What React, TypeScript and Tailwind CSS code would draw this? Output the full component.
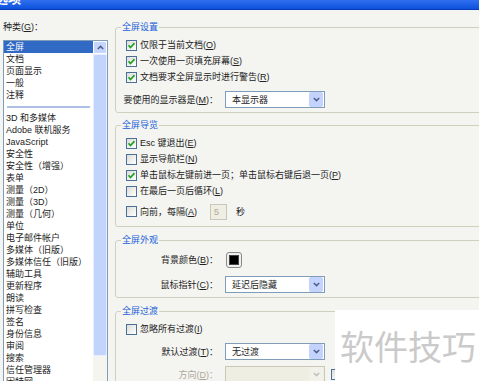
import React from "react";

const topItems = ["文档", "页面显示", "一般", "注释"];
const moreItems = [
  "3D 和多媒体",
  "Adobe 联机服务",
  "JavaScript",
  "安全性",
  "安全性（增强）",
  "表单",
  "测量（2D）",
  "测量（3D）",
  "测量（几何）",
  "单位",
  "电子邮件帐户",
  "多媒体（旧版）",
  "多媒体信任（旧版）",
  "辅助工具",
  "更新程序",
  "朗读",
  "拼写检查",
  "签名",
  "身份信息",
  "审阅",
  "搜索",
  "信任管理器",
  "因特网",
];

function Mn({ k }: { k: string }) {
  return (
    <span>
      (<span className="underline">{k}</span>)
    </span>
  );
}

function Box({ on }: { on?: boolean }) {
  return (
    <div className="w-[11px] h-[11px] shrink-0 border border-[#4a6f99] bg-gradient-to-br from-[#dcdcd7] to-white flex items-center justify-center">
      {on && (
        <svg width="9" height="9" viewBox="0 0 9 9">
          <path d="M1.5 4.3 L3.5 6.5 L7.5 2.2" fill="none" stroke="#21a121" strokeWidth="1.7" />
        </svg>
      )}
    </div>
  );
}

function Check({ on, text, k }: { on?: boolean; text: string; k: string }) {
  return (
    <div className="h-[16px] flex items-center gap-[3px] whitespace-nowrap">
      <Box on={on} />
      <span>
        {text}
        <Mn k={k} />
      </span>
    </div>
  );
}

function Chevron({ color }: { color: string }) {
  return (
    <svg width="7" height="5" viewBox="0 0 7 5">
      <path d="M0.8 1 L3.5 3.6 L6.2 1" fill="none" stroke={color} strokeWidth="1.5" />
    </svg>
  );
}

function Select({ value, disabled }: { value?: string; disabled?: boolean }) {
  return (
    <div
      className={`w-[100px] h-[17px] border flex items-center ${
        disabled ? "border-[#c9c7ba] bg-[#efeee2]" : "border-[#7f9db9] bg-white"
      }`}
    >
      <span className="flex-1 pl-[6px]">{value}</span>
      <div
        className={`w-[14px] h-[15px] mr-[1px] rounded-[2px] flex items-center justify-center ${
          disabled ? "bg-[#f3f2ea]" : "bg-[#c3d3fd]"
        }`}
      >
        <Chevron color={disabled ? "#c0c0b8" : "#4d6185"} />
      </div>
    </div>
  );
}

function Row({ label, k, gray, children }: { label: string; k: string; gray?: boolean; children: React.ReactNode }) {
  return (
    <div className={`flex items-center ${gray ? "text-[#aca899]" : ""}`}>
      <div className="w-[92px] shrink-0 flex justify-end whitespace-nowrap">
        <span>
          {label}
          <Mn k={k} />：
        </span>
      </div>
      <div className="ml-[7px] flex items-center">{children}</div>
    </div>
  );
}

function Group({ title, className, children }: { title: string; className?: string; children: React.ReactNode }) {
  return (
    <fieldset className={`border border-[#d0d0bf] rounded-[3px] px-[5px] ${className ?? ""}`}>
      <legend className="px-[1px] leading-[12px] text-[#1b5fd8]">{title}</legend>
      <div className="pl-[5px]">{children}</div>
    </fieldset>
  );
}

export default function App() {
  return (
    <div className="w-[479px] h-[381px] overflow-hidden relative bg-[#f4f4f1] text-[9px] leading-[12px] text-[#222] font-['Liberation_Sans','Noto_Sans_CJK_SC',sans-serif]">
      {/* title bar, only its lower edge is in frame */}
      <div className="h-[10px] bg-gradient-to-b from-[#2f6ff0] to-[#0b52dc] border-b border-[#0a3ab8] overflow-hidden">
        <div className="-ml-[18px] -mt-[8px] text-[13px] leading-[14px] font-bold text-white">首选项</div>
      </div>

      <div className="flex">
        {/* categories */}
        <div className="w-[115px] shrink-0 pl-[3px] pt-[11px]">
          <div>
            种类<Mn k="G" />：
          </div>
          <div className="mt-[7px] w-[105px] h-[360px] border border-[#7f9db9] bg-white flex">
            <div className="flex-1 flex flex-col">
              <div className="h-[12px] bg-[#316ac5] text-white pl-[2px]">全屏</div>
              {topItems.map((t) => (
                <div key={t} className="h-[12px] pl-[2px] whitespace-nowrap">
                  {t}
                </div>
              ))}
              <div className="h-[11px] flex items-center pl-[3px] pr-[3px]">
                <div className="h-[2px] w-full bg-[#aec0e6]" />
              </div>
              {moreItems.map((t) => (
                <div key={t} className="h-[12px] pl-[2px] whitespace-nowrap">
                  {t}
                </div>
              ))}
            </div>
            <div className="w-[14px] flex flex-col">
              <div className="h-[13px] bg-[#c6d5fb] border border-white rounded-[2px] flex items-center justify-center">
                <svg width="7" height="5" viewBox="0 0 7 5">
                  <path d="M0.8 4 L3.5 1.4 L6.2 4" fill="none" stroke="#4d6185" strokeWidth="1.5" />
                </svg>
              </div>
              <div className="h-[302px] bg-[#c3d4fc] border border-[#e6eefe] rounded-[2px]" />
              <div className="flex-1 bg-[#f5f5ef]" />
            </div>
          </div>
        </div>

        {/* settings */}
        <div className="w-[380px] shrink-0 pt-[11px]">
          <Group title="全屏设置">
            <div className="pt-[4px]">
              <Check on text="仅限于当前文档" k="O" />
              <Check on text="一次使用一页填充屏幕" k="S" />
              <Check on text="文档要求全屏显示时进行警告" k="R" />
            </div>
            <div className="mt-[6px] pb-[4px]">
              <Row label="要使用的显示器是" k="M">
                <Select value="本显示器" />
              </Row>
            </div>
          </Group>

          <Group title="全屏导览" className="mt-[6px]">
            <div className="pt-[4px]">
              <Check on text="Esc 键退出" k="E" />
              <Check text="显示导航栏" k="N" />
              <Check on text="单击鼠标左键前进一页；单击鼠标右键后退一页" k="P" />
              <Check text="在最后一页后循环" k="L" />
            </div>
            <div className="mt-[4px] pb-[6px] h-[23px] flex items-center">
              <div className="w-[84px] flex items-center gap-[3px] whitespace-nowrap">
                <Box />
                <span>
                  向前，每隔<Mn k="A" />
                </span>
              </div>
              <div className="w-[17px] h-[16px] border border-[#c9c7ba] bg-[#efeee2] text-[#aca899] pl-[3px] flex items-center">5</div>
              <span className="ml-[9px]">秒</span>
            </div>
          </Group>

          <Group title="全屏外观" className="mt-[7px]">
            <div className="pt-[5px] pb-[4px]">
              <div className="h-[17px] flex items-center">
                <Row label="背景颜色" k="B">
                  <div className="ml-[1px] w-[16px] h-[16px] border border-[#8a8a8a] rounded-[3px] bg-[#f0f0ee] p-[2px]">
                    <div className="w-full h-full bg-black border border-[#444]" />
                  </div>
                </Row>
              </div>
              <div className="mt-[8px]">
                <Row label="鼠标指针" k="C">
                  <Select value="延迟后隐藏" />
                </Row>
              </div>
            </div>
          </Group>

          <Group title="全屏过渡" className="mt-[7px]">
            <div className="pt-[4px]">
              <Check text="忽略所有过渡" k="I" />
            </div>
            <div className="mt-[6px]">
              <Row label="默认过渡" k="T">
                <Select value="无过渡" />
              </Row>
            </div>
            <div className="mt-[6px] pb-[6px]">
              <Row label="方向" k="D" gray>
                <Select disabled />
                <div className="ml-[6px]">
                  <Box />
                </div>
              </Row>
            </div>
          </Group>
        </div>
      </div>

      {/* watermark */}
      <div className="absolute left-[335px] top-[310px] w-[144px] h-[71px] bg-white pl-[5px] pt-[16px]">
        <div className="text-[34px] leading-[40px] text-[#cacaca] whitespace-nowrap font-['Noto_Sans_CJK_SC',sans-serif]">软件技巧</div>
      </div>
    </div>
  );
}
